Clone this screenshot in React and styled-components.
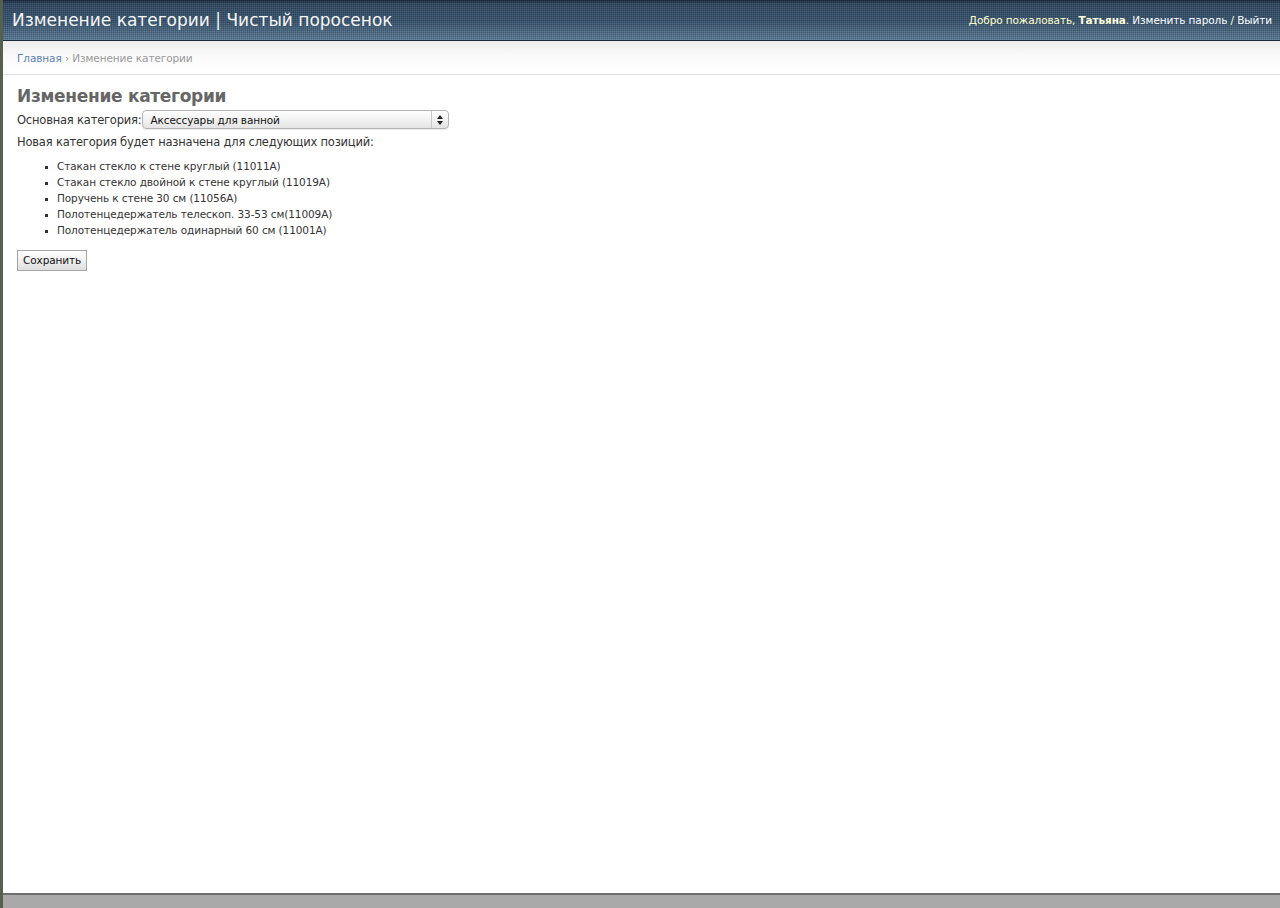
import React from "react";
import styled, { createGlobalStyle } from "styled-components";

const GlobalStyle = createGlobalStyle`
  html, body {
    margin: 0;
    padding: 0;
    height: 100%;
  }
  body {
    font-family: "DejaVu Sans", "Liberation Sans", sans-serif;
    background: #ffffff;
    color: #333333;
  }
  #root {
    height: 100%;
  }
`;

const Page = styled.div`
  display: flex;
  flex-direction: column;
  height: 908px;
  border-left: 3px solid #56604f;
  box-sizing: border-box;
`;

const Header = styled.div`
  height: 40px;
  display: flex;
  align-items: center;
  justify-content: space-between;
  padding: 0 8px 0 9px;
  background-color: #45617e;
  background-image:
    repeating-linear-gradient(to right, rgba(0, 0, 0, 0.16) 0 1px, transparent 1px 2px),
    repeating-linear-gradient(to bottom, rgba(0, 0, 0, 0.16) 0 1px, transparent 1px 2px),
    linear-gradient(to bottom, #22324a 0%, #3e5873 10%, #466480 55%, #6c8eaa 100%);
  border-bottom: 1px solid #1d2a38;
  flex-shrink: 0;
`;

const SiteTitle = styled.h1`
  margin: 0;
  font-size: 17px;
  font-weight: normal;
  color: #f5f5f5;
`;

const UserTools = styled.div`
  font-size: 10.5px;
  letter-spacing: -0.1px;
  color: #ffffcc;
  white-space: nowrap;
`;

const UserName = styled.strong`
  color: #ffffdd;
`;

const ToolLink = styled.a`
  color: #ffffff;
  text-decoration: none;
`;

const Breadcrumbs = styled.div`
  height: 33px;
  display: flex;
  align-items: center;
  padding: 0 14px;
  font-size: 10.5px;
  letter-spacing: -0.1px;
  color: #999999;
  background: linear-gradient(to bottom, #ececec 0%, #fafafa 45%, #ffffff 100%);
  border-bottom: 1px solid #e2e2e2;
  flex-shrink: 0;
`;

const CrumbLink = styled.a`
  color: #5b80b2;
  text-decoration: none;
`;

const Content = styled.div`
  flex: 1;
  padding: 11px 14px;
`;

const Title = styled.h2`
  margin: 0 0 4px 0;
  font-size: 17px;
  letter-spacing: -0.3px;
  font-weight: bold;
  color: #666666;
`;

const FieldRow = styled.div`
  display: flex;
  align-items: center;
  font-size: 11.5px;
  letter-spacing: -0.2px;
  color: #333333;
`;

const SelectBox = styled.div`
  position: relative;
  width: 298px;
  height: 17px;
  margin-left: 1px;
  border: 1px solid #b4b4b4;
  border-radius: 4px;
  background: linear-gradient(to bottom, #ffffff 0%, #f2f2f2 50%, #e4e4e4 100%);
  box-shadow: 0 1px 1px rgba(0, 0, 0, 0.08);
  display: flex;
  align-items: center;
  font-size: 10.5px;
  letter-spacing: -0.1px;
  color: #111111;
  padding-left: 7px;
  box-sizing: content-box;
`;

const SelectArrows = styled.div`
  position: absolute;
  right: 0;
  top: 0;
  bottom: 0;
  width: 16px;
  border-left: 1px solid #c8c8c8;
  display: flex;
  align-items: center;
  justify-content: center;
`;

const Note = styled.p`
  margin: 6px 0 9px 0;
  font-size: 11.5px;
  letter-spacing: -0.2px;
  color: #333333;
`;

const ItemList = styled.ul`
  margin: 0 0 11px 0;
  padding-left: 40px;
  list-style: square;
  font-size: 10.5px;
  letter-spacing: -0.1px;
  color: #333333;

  li {
    line-height: 16px;
  }
  li::marker {
    font-size: 9px;
  }
`;

const SaveButton = styled.button`
  font-family: "DejaVu Sans", "Liberation Sans", sans-serif;
  font-size: 10.5px;
  letter-spacing: -0.1px;
  color: #111111;
  height: 21px;
  padding: 0 5px;
  border: 1px solid #a5a5a5;
  border-radius: 0;
  background: linear-gradient(to bottom, #ffffff 0%, #f0f0f0 50%, #dedede 100%);
`;

const Footer = styled.div`
  height: 13px;
  background: #a9a9a9;
  border-top: 2px solid #6e6e6e;
  flex-shrink: 0;
`;

const items = [
  "Стакан стекло к стене круглый (11011A)",
  "Стакан стекло двойной к стене круглый (11019A)",
  "Поручень к стене 30 см (11056A)",
  "Полотенцедержатель телескоп. 33-53 см(11009A)",
  "Полотенцедержатель одинарный 60 см (11001A)",
];

const App = () => (
  <>
    <GlobalStyle />
    <Page>
      <Header>
        <SiteTitle>Изменение категории | Чистый поросенок</SiteTitle>
        <UserTools>
          Добро пожаловать, <UserName>Татьяна</UserName>.{" "}
          <ToolLink href="#">Изменить пароль</ToolLink> /{" "}
          <ToolLink href="#">Выйти</ToolLink>
        </UserTools>
      </Header>
      <Breadcrumbs>
        <CrumbLink href="#">Главная</CrumbLink>&nbsp;›&nbsp;Изменение категории
      </Breadcrumbs>
      <Content>
        <Title>Изменение категории</Title>
        <FieldRow>
          Основная категория:
          <SelectBox>
            Аксессуары для ванной
            <SelectArrows>
              <svg width="6" height="10" viewBox="0 0 6 10">
                <path d="M3 0 L6 4 L0 4 Z" fill="#222" />
                <path d="M0 6 L6 6 L3 10 Z" fill="#222" />
              </svg>
            </SelectArrows>
          </SelectBox>
        </FieldRow>
        <Note>Новая категория будет назначена для следующих позиций:</Note>
        <ItemList>
          {items.map((item) => (
            <li key={item}>{item}</li>
          ))}
        </ItemList>
        <SaveButton>Сохранить</SaveButton>
      </Content>
      <Footer />
    </Page>
  </>
);

export default App;
